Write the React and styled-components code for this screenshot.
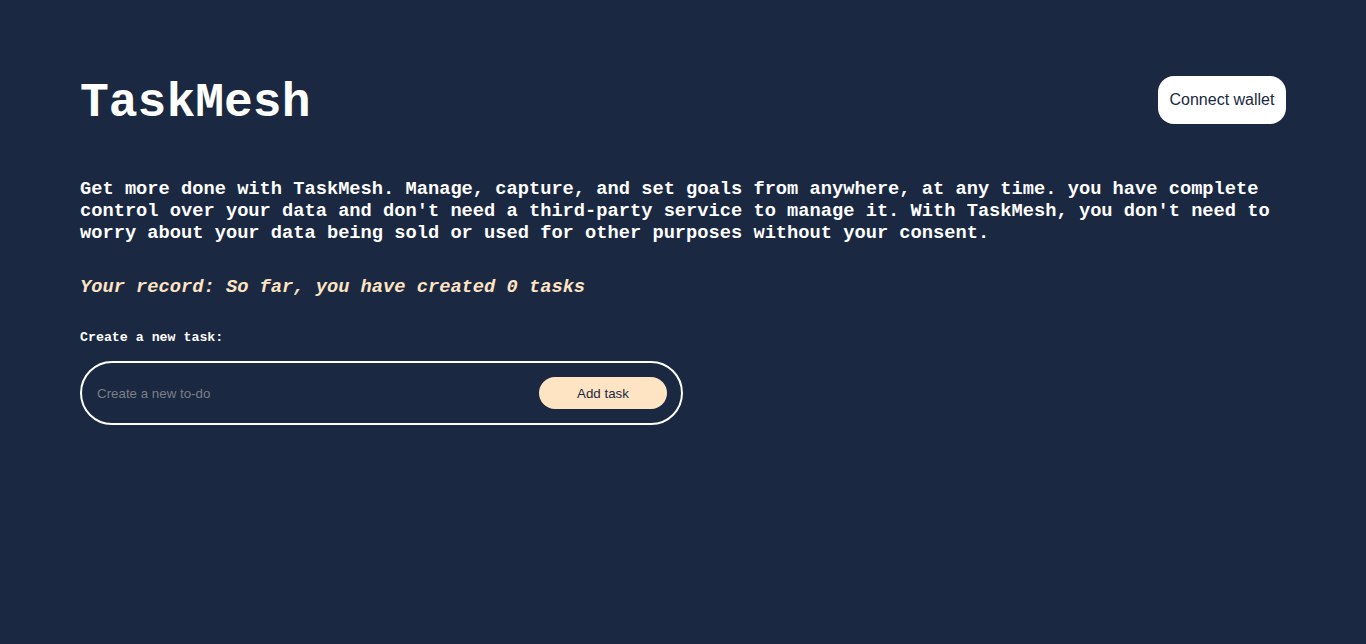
import React, { useState } from 'react';
import styled, { createGlobalStyle } from 'styled-components';

const GlobalStyle = createGlobalStyle`
  html, body {
    margin: 0;
    padding: 0;
    background-color: #1a2841;
    min-height: 100%;
  }
  body {
    font-family: "Liberation Mono", "Courier New", monospace;
    color: #ffffff;
  }
`;

const Page = styled.div`
  min-height: 644px;
  padding: 76px 80px 0;
  box-sizing: border-box;
`;

const Header = styled.header`
  display: flex;
  align-items: center;
  justify-content: space-between;
  height: 48px;
`;

const Title = styled.h1`
  margin: 0;
  font-size: 48px;
  line-height: 48px;
  font-weight: bold;
  color: #ffffff;
  position: relative;
  top: 3px;
`;

const WalletButton = styled.button`
  width: 128px;
  height: 48px;
  border: none;
  border-radius: 16px;
  background-color: #ffffff;
  color: #1a2841;
  font-family: "Liberation Sans", Arial, sans-serif;
  font-size: 16px;
  cursor: pointer;
`;

const Intro = styled.h3`
  margin: 54px 0 0;
  font-size: 18.72px;
  line-height: 22px;
  font-weight: bold;
`;

const Record = styled.h3`
  margin: 32px 0 0;
  font-size: 18.72px;
  line-height: 22px;
  font-weight: bold;
  font-style: italic;
  color: #ffe4c4;
`;

const Label = styled.h5`
  margin: 32px 0 0;
  font-size: 13.28px;
  line-height: 15px;
  font-weight: bold;
`;

const TaskForm = styled.form`
  display: flex;
  align-items: center;
  justify-content: space-between;
  margin-top: 16px;
  width: 603px;
  height: 64px;
  box-sizing: border-box;
  border: 2px solid #ffffff;
  border-radius: 32px;
  padding: 0 14px 0 15px;
`;

const TaskInput = styled.input`
  flex: 1;
  background: transparent;
  border: none;
  outline: none;
  color: #ffffff;
  font-family: "Liberation Sans", Arial, sans-serif;
  font-size: 13.33px;
  padding: 0;

  &::placeholder {
    color: #7b7f88;
  }
`;

const AddButton = styled.button`
  width: 128px;
  height: 32px;
  border: none;
  border-radius: 16px;
  background-color: #ffe4c4;
  color: #1a2841;
  font-family: "Liberation Sans", Arial, sans-serif;
  font-size: 13.33px;
  cursor: pointer;
`;

function App() {
  const [taskText, setTaskText] = useState('');
  const [count, setCount] = useState(0);

  const handleSubmit = (e) => {
    e.preventDefault();
    if (!taskText.trim()) return;
    setCount(count + 1);
    setTaskText('');
  };

  return (
    <>
      <GlobalStyle />
      <Page>
        <Header>
          <Title>TaskMesh</Title>
          <WalletButton type="button">Connect wallet</WalletButton>
        </Header>
        <Intro>
          Get more done with TaskMesh. Manage, capture, and set goals from anywhere, at any time. you have
          complete control over your data and don't need a third-party service to manage it. With TaskMesh,
          you don't need to worry about your data being sold or used for other purposes without your consent.
        </Intro>
        <Record>Your record: So far, you have created {count} tasks</Record>
        <Label>Create a new task:</Label>
        <TaskForm onSubmit={handleSubmit}>
          <TaskInput
            placeholder="Create a new to-do"
            value={taskText}
            onChange={(e) => setTaskText(e.target.value)}
          />
          <AddButton type="submit">Add task</AddButton>
        </TaskForm>
      </Page>
    </>
  );
}

export default App;
